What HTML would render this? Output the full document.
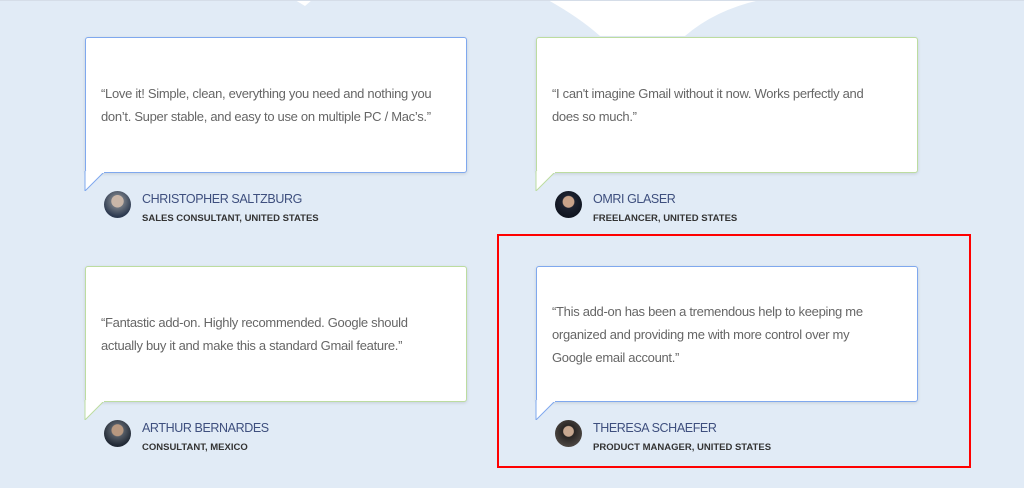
<!DOCTYPE html>
<html><head><style>
body{margin:0;width:1024px;height:488px;background:#e1ebf6;position:relative;overflow:hidden;font-family:"Liberation Sans",sans-serif}
.card{position:absolute;width:382px;height:136px;background:#fff;border:1px solid #7fa8ee;border-radius:3px;box-shadow:0 1px 3px rgba(0,0,0,.12);box-sizing:border-box;display:flex;align-items:center;padding:0 15px;color:#666;font-size:13px;letter-spacing:-0.3px;line-height:23px;white-space:nowrap}
.g{border-color:#bcdca0}
.tail{position:absolute;width:20px;height:20px}
.name{position:absolute;color:#3e4f7e;font-size:12.5px;letter-spacing:-0.4px}
.sub{position:absolute;color:#333;font-size:9.5px;font-weight:bold}
.av{position:absolute;width:27px;height:27px;border-radius:50%}
</style></head><body>
<svg style="position:absolute;left:0;top:0" width="1024" height="40">
<path d="M548 0 Q580 18 600 36 L685 36 Q715 10 760 0Z" fill="#fff"/>
<path d="M295 0 L305 6 L312 0Z" fill="#fff"/>
<rect x="0" y="0" width="1024" height="1" fill="#d5dde8"/>
</svg>

<div class="card" style="left:85px;top:37px"><div>“Love it! Simple, clean, everything you need and nothing you<br>don’t. Super stable, and easy to use on multiple PC / Mac’s.”</div></div>
<svg class="tail" style="left:84px;top:171px" width="22" height="22"><path d="M1 0 L1 20 L20 1" fill="#fff" stroke="#7fa8ee"/><rect x="2" y="0" width="18" height="2" fill="#fff"/></svg>
<div class="av" style="left:104px;top:191px;background:radial-gradient(circle at 50% 38%,#c9b6a8 0 28%,#6f7680 30%,#2d3a50 70%)"></div>
<div class="name" style="left:142px;top:192px">CHRISTOPHER SALTZBURG</div>
<div class="sub" style="left:142px;top:213px">SALES CONSULTANT, UNITED STATES</div>

<div class="card g" style="left:536px;top:37px"><div>“I can't imagine Gmail without it now. Works perfectly and<br>does so much.”</div></div>
<svg class="tail" style="left:535px;top:171px" width="22" height="22"><path d="M1 0 L1 20 L20 1" fill="#fff" stroke="#bcdca0"/><rect x="2" y="0" width="18" height="2" fill="#fff"/></svg>
<div class="av" style="left:555px;top:191px;background:radial-gradient(circle at 50% 40%,#c9a38a 0 26%,#1d2230 30%,#101520 70%)"></div>
<div class="name" style="left:593px;top:192px">OMRI GLASER</div>
<div class="sub" style="left:593px;top:213px">FREELANCER, UNITED STATES</div>

<div class="card g" style="left:85px;top:266px"><div>“Fantastic add-on. Highly recommended. Google should<br>actually buy it and make this a standard Gmail feature.”</div></div>
<svg class="tail" style="left:84px;top:400px" width="22" height="22"><path d="M1 0 L1 20 L20 1" fill="#fff" stroke="#bcdca0"/><rect x="2" y="0" width="18" height="2" fill="#fff"/></svg>
<div class="av" style="left:104px;top:420px;background:radial-gradient(circle at 50% 38%,#b89880 0 26%,#555c66 30%,#222a36 70%)"></div>
<div class="name" style="left:142px;top:421px">ARTHUR BERNARDES</div>
<div class="sub" style="left:142px;top:442px">CONSULTANT, MEXICO</div>

<div class="card" style="left:536px;top:266px"><div>“This add-on has been a tremendous help to keeping me<br>organized and providing me with more control over my<br>Google email account.”</div></div>
<svg class="tail" style="left:535px;top:400px" width="22" height="22"><path d="M1 0 L1 20 L20 1" fill="#fff" stroke="#7fa8ee"/><rect x="2" y="0" width="18" height="2" fill="#fff"/></svg>
<div class="av" style="left:555px;top:420px;background:radial-gradient(circle at 50% 42%,#c8a890 0 24%,#2a2624 28%,#4a4440 70%)"></div>
<div class="name" style="left:593px;top:421px">THERESA SCHAEFER</div>
<div class="sub" style="left:593px;top:442px">PRODUCT MANAGER, UNITED STATES</div>

<div style="position:absolute;left:497px;top:234px;width:474px;height:234px;border:2px solid #f00;box-sizing:border-box"></div>
</body></html>
